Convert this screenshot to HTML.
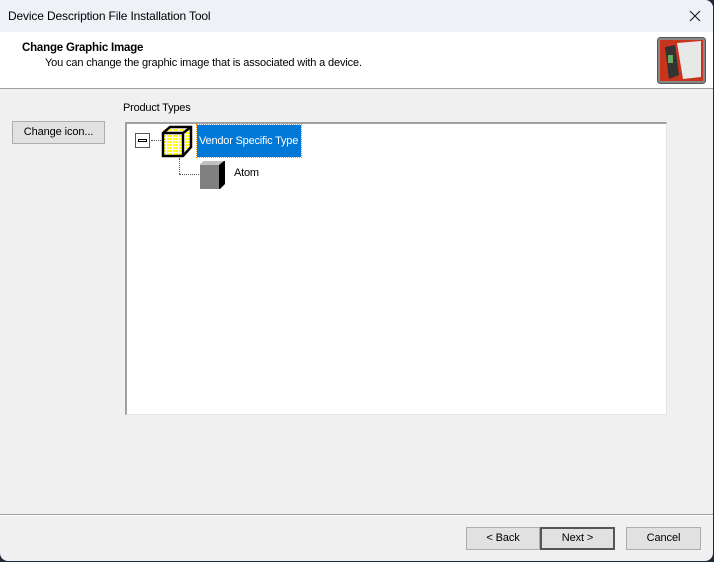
<!DOCTYPE html>
<html><head><meta charset="utf-8"><style>
*{margin:0;padding:0;box-sizing:border-box}
body{width:714px;height:562px;background:#1e2a3a;font-family:"Liberation Sans",sans-serif;font-size:11px;color:#000;position:relative;overflow:hidden}
.win{position:absolute;left:0;top:0;width:713px;height:561px;background:#f0f0f0;border-radius:0 8px 8px 8px;overflow:hidden}
.title{position:absolute;left:0;top:0;width:713px;height:32px;background:#eef1f6}
.title span{position:absolute;left:8px;top:9px;font-size:12px;letter-spacing:-0.15px}
.x{position:absolute;left:688px;top:9px}
.hdr{position:absolute;left:0;top:32px;width:713px;height:57px;background:#fff;border-bottom:1px solid #a0a0a0}
.h1{position:absolute;left:22px;top:10px;font-weight:bold;font-size:11.5px;letter-spacing:-0.2px}
.h2{position:absolute;left:45px;top:25px;font-size:11px;letter-spacing:-0.15px}
.btn{position:absolute;height:23px;background:#e1e1e1;border:1px solid #adadad;text-align:center;line-height:21px;font-size:11px;letter-spacing:-0.1px}
.tree{position:absolute;left:125px;top:122px;width:542px;height:293px;background:#fff;border-top:2px solid #a0a0a0;border-left:2px solid #a0a0a0;border-right:1px solid #e3e3e3;border-bottom:1px solid #e3e3e3}
.sep{position:absolute;left:0;top:514px;width:713px;border-top:1px solid #a0a0a0;border-bottom:1px solid #fff}
</style></head><body><div class="win">
<div class="title"><span>Device Description File Installation Tool</span>
<svg class="x" width="14" height="14"><path d="M2 2L12 12M12 2L2 12" stroke="#222" stroke-width="1.2"/></svg></div>
<div class="hdr"><div class="h1">Change Graphic Image</div><div class="h2">You can change the graphic image that is associated with a device.</div>
<svg style="position:absolute;left:657px;top:5px" width="49" height="47"><rect x="0.5" y="0.5" width="48" height="46" rx="3" fill="#888" stroke="#555"/><rect x="3" y="3" width="43" height="41" fill="#c8341c"/><path d="M20 6L44 4L44 40L26 42Z" fill="#e8e8e8"/><path d="M8 10L18 8L22 38L12 42Z" fill="#333"/><rect x="11" y="18" width="5" height="8" fill="#6a6"/></svg></div>
<div style="position:absolute;left:123px;top:102px;font-size:11px;letter-spacing:-0.2px">Product Types</div>
<div class="btn" style="left:12px;top:121px;width:93px">Change icon...</div>
<div class="tree">
<div style="position:absolute;left:8px;top:9px;width:15px;height:15px;border:1px solid #555;background:#fff"><div style="position:absolute;left:2px;top:5px;width:9px;height:3px;border:1px solid #000"></div></div>
<div style="position:absolute;left:24px;top:16px;width:10px;border-top:1px dotted #555"></div>
<svg style="position:absolute;left:34px;top:-1px" width="33" height="36"><defs><pattern id="d" width="3" height="3" patternUnits="userSpaceOnUse"><rect width="3" height="3" fill="#fff"/><rect width="2" height="2" fill="#ff0"/></pattern></defs><path d="M2 10L9 4L30 4L30 24L22 33L2 33Z" fill="url(#d)" stroke="#000" stroke-width="2.5"/><path d="M2 10L22 10L30 4M22 10L22 33" stroke="#000" stroke-width="2.5" fill="none"/></svg>
<div style="position:absolute;left:52px;top:34px;height:16px;border-left:1px dotted #555"></div>
<div style="position:absolute;left:52px;top:50px;width:20px;border-top:1px dotted #555"></div>
<div style="position:absolute;left:70px;top:1px;width:104px;height:32px;background:#0078d7;color:#fff;line-height:32px;padding-left:2px;font-size:11px;letter-spacing:-0.2px;white-space:nowrap;outline:1px dotted #f90">Vendor Specific Type</div>
<svg style="position:absolute;left:72px;top:36px" width="28" height="30"><path d="M1 5L5 1L26 1L26 24L21 29L1 29Z" fill="#000"/><rect x="1" y="5" width="19" height="24" fill="#808080"/><path d="M1 5L5 1L25 1L20 5Z" fill="#c0c0c0"/></svg>
<div style="position:absolute;left:107px;top:43px;font-size:11px;letter-spacing:-0.2px">Atom</div>
</div>
<div class="sep"></div>
<div class="btn" style="left:466px;top:527px;width:74px">&lt; Back</div>
<div class="btn" style="left:540px;top:527px;width:75px;border:2px solid #555;line-height:19px">Next &gt;</div>
<div class="btn" style="left:626px;top:527px;width:75px">Cancel</div>
</div></body></html>
